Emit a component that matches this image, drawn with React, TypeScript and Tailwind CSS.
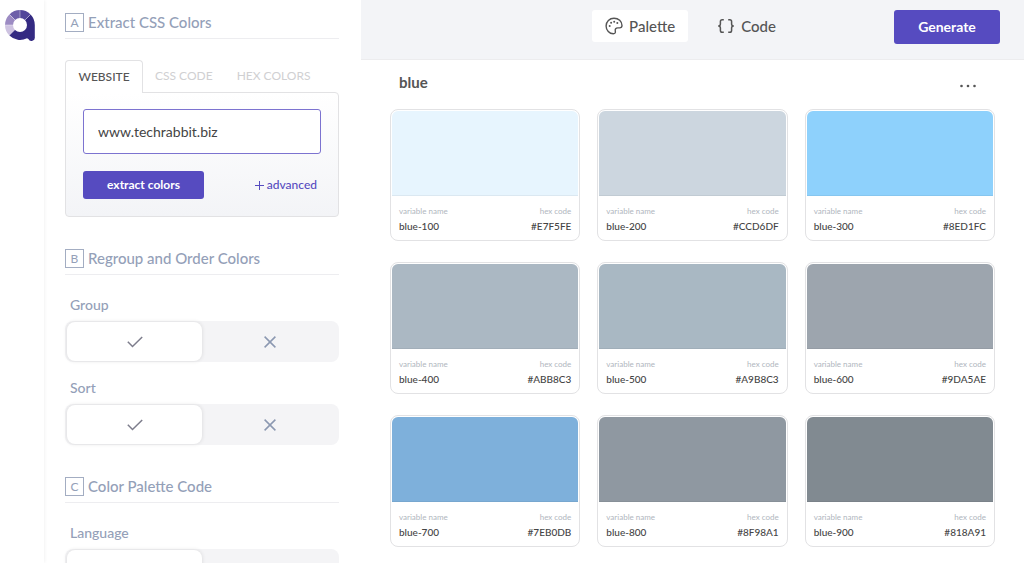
import { clsx } from "clsx";
import { useState } from "react";

type Swatch = { name: string; hex: string };

const swatches: Swatch[] = [
  { name: "blue-100", hex: "#E7F5FE" },
  { name: "blue-200", hex: "#CCD6DF" },
  { name: "blue-300", hex: "#8ED1FC" },
  { name: "blue-400", hex: "#ABB8C3" },
  { name: "blue-500", hex: "#A9B8C3" },
  { name: "blue-600", hex: "#9DA5AE" },
  { name: "blue-700", hex: "#7EB0DB" },
  { name: "blue-800", hex: "#8F98A1" },
  { name: "blue-900", hex: "#818A91" },
];

const Logo = () => (
  <svg viewBox="0 0 30 31" className="w-[30px] h-[31px]" aria-hidden="true">
    <path d="M15 15 V0 A15 15 0 0 1 25.6 4.4 Z" fill="#51469a" />
    <path d="M15 15 L4.4 4.4 A15 15 0 0 1 15 0 Z" fill="#6e60a9" />
    <path d="M15 15 H0 A15 15 0 0 1 4.4 4.4 Z" fill="#9c8bc3" />
    <path d="M15 15 L4.4 25.6 A15 15 0 0 1 0 15 Z" fill="#cec3e1" />
    <path
      d="M15 15 L25.6 4.4 Q29.8 8.8 29.8 15 V27 A3.4 3.4 0 0 1 23.4 29 L22 28.2 A15 15 0 0 1 4.4 25.6 Z"
      fill="#342a82"
    />
    <path d="M15 0 V8 M4.4 4.4 L10 10 M0 15 H8 M25.6 4.4 L20 10" stroke="#fff" strokeWidth="0.4" />
    <circle cx="15" cy="15" r="7" fill="#fff" />
  </svg>
);

const PaletteIcon = () => (
  <svg viewBox="0 0 18 18" className="size-[18px]" fill="none" aria-hidden="true">
    <path
      d="M9 1.2 C4.5 1.2 1.1 4.6 1.1 8.9 C1.1 13.2 4.4 16.8 8.3 16.8 C10.2 16.8 10.6 15.6 10.3 14 C9.9 12 10.8 10.9 12.8 10.9 H14.6 C16.3 10.9 17 10 17 8.6 C17 4.4 13.5 1.2 9 1.2 Z"
      stroke="currentColor"
      strokeWidth="1.4"
    />
    <g fill="currentColor">
      <circle cx="4.7" cy="9" r="1" />
      <circle cx="6.1" cy="5.8" r="1" />
      <circle cx="9.2" cy="4.7" r="1" />
      <circle cx="12.3" cy="5.9" r="1" />
    </g>
  </svg>
);

const BracesIcon = () => (
  <svg
    viewBox="0 0 18 16"
    className="w-[18px] h-4"
    fill="none"
    stroke="currentColor"
    strokeWidth="1.5"
    aria-hidden="true"
  >
    <path d="M6.8 1.7 H5.2 Q3.4 1.7 3.4 3.5 V6 Q3.4 8 1.2 8 Q3.4 8 3.4 10 V12.5 Q3.4 14.3 5.2 14.3 H6.8" />
    <path d="M11.2 1.7 H12.8 Q14.6 1.7 14.6 3.5 V6 Q14.6 8 16.8 8 Q14.6 8 14.6 10 V12.5 Q14.6 14.3 12.8 14.3 H11.2" />
  </svg>
);

const SectionTitle = ({ letter, title }: { letter: string; title: string }) => (
  <h2 className="flex items-center gap-1 pb-[6px] border-b border-[#ededf0] text-[#94a0b8]">
    <span className="flex items-center justify-center size-[19px] border border-[#a3adc2] text-xs">
      {letter}
    </span>
    <span className="text-[15px] leading-[19px] font-medium">{title}</span>
  </h2>
);

const Toggle = ({ label }: { label: string }) => {
  const [on, setOn] = useState(true);
  const option = "flex items-center justify-center rounded-lg";
  const active = "bg-white shadow-[0_0_4px_rgba(0,0,0,0.12)]";

  return (
    <div role="group" aria-label={label}>
      <div className="pl-[5px] mb-[6px] text-sm font-medium text-[#94a0b8]">{label}</div>
      <div className="grid grid-cols-2 h-[41px] py-px px-0.5 rounded-lg bg-[#f4f4f6]">
        <button
          type="button"
          aria-label={`${label} on`}
          aria-pressed={on}
          onClick={() => setOn(true)}
          className={clsx(option, on && active)}
        >
          <svg viewBox="0 0 16 12" className="w-4 h-3" fill="none" stroke="#7d7d8c" strokeWidth="1.5">
            <path d="M0.8 5.8 L5.5 10.5 L15.2 1" />
          </svg>
        </button>
        <button
          type="button"
          aria-label={`${label} off`}
          aria-pressed={!on}
          onClick={() => setOn(false)}
          className={clsx(option, !on && active)}
        >
          <svg viewBox="0 0 12 12" className="size-3" fill="none" stroke="#8b98b1" strokeWidth="1.5">
            <path d="M0.6 0.6 L11.4 11.4 M11.4 0.6 L0.6 11.4" />
          </svg>
        </button>
      </div>
    </div>
  );
};

const ExtractForm = () => (
  <div className="mt-[21px]">
    <div className="flex items-stretch h-8 text-xs">
      <button
        type="button"
        className="relative z-10 w-[78px] -mb-px border border-b-0 border-[#e2e2e4] rounded-t bg-white text-[#555] font-medium"
      >
        WEBSITE
      </button>
      <button type="button" className="px-3 text-[#d0d0d2]">
        CSS CODE
      </button>
      <button type="button" className="px-3 text-[#d0d0d2]">
        HEX COLORS
      </button>
    </div>
    <form
      onSubmit={(e) => e.preventDefault()}
      className="px-[17px] pt-4 pb-[17px] border border-[#e2e2e4] rounded-b rounded-tr bg-linear-to-b from-white to-[#f3f4f7]"
    >
      <input
        type="text"
        aria-label="Website"
        defaultValue="www.techrabbit.biz"
        className="w-full h-[45px] px-[14px] border border-[#7c73d0] rounded-[3px] bg-white text-sm text-[#444] outline-none"
      />
      <div className="flex items-center justify-between mt-[17px] pr-1">
        <button
          type="submit"
          className="w-[121px] h-[28px] rounded-[3px] bg-[#564bc0] text-xs font-bold text-white"
        >
          extract colors
        </button>
        <button type="button" className="flex items-center gap-[3px] text-xs font-medium text-[#564bc0]">
          <svg viewBox="0 0 9 9" className="size-[9px]" stroke="currentColor" strokeWidth="1">
            <path d="M4.5 0 V9 M0 4.5 H9" />
          </svg>
          advanced
        </button>
      </div>
    </form>
  </div>
);

const Sidebar = () => (
  <aside className="w-[317px] shrink-0 pl-[21px] pr-[22px] pt-[13px] flex flex-col gap-8">
    <section>
      <SectionTitle letter="A" title="Extract CSS Colors" />
      <ExtractForm />
    </section>
    <section>
      <SectionTitle letter="B" title="Regroup and Order Colors" />
      <div className="flex flex-col gap-4 mt-5">
        <Toggle label="Group" />
        <Toggle label="Sort" />
      </div>
    </section>
    <section>
      <SectionTitle letter="C" title="Color Palette Code" />
      <div className="mt-5">
        <Toggle label="Language" />
      </div>
    </section>
  </aside>
);

const Header = () => (
  <header className="flex items-start h-[60px] pt-[10px] pr-6 bg-[#f3f4f7] border-b border-[#ececee]">
    <div className="flex-1 pl-5" />
    <nav className="flex gap-4 text-[15px] font-medium text-[#555]">
      <button type="button" className="flex items-center gap-[6px] h-8 px-[13px] rounded-[3px] bg-white">
        <PaletteIcon />
        Palette
      </button>
      <button type="button" className="flex items-center gap-[6px] h-8 px-[13px] rounded-[3px]">
        <BracesIcon />
        Code
      </button>
    </nav>
    <div className="flex-1 flex justify-end">
      <button
        type="button"
        className="w-[106px] h-[34px] rounded-[3px] bg-[#564bc0] text-sm font-bold text-white"
      >
        Generate
      </button>
    </div>
  </header>
);

const Card = ({ name, hex }: Swatch) => (
  <li className="p-px border border-[#e2e2e4] rounded-lg h-[132px]">
    <div
      className="h-[85px] rounded-t-[6px] border-b border-black/5"
      style={{ backgroundColor: hex }}
    />
    <dl className="flex justify-between px-[7px] pt-2 text-[10px] leading-4 font-medium text-[#444]">
      <div>
        <dt className="text-[8px] leading-[14px] font-normal text-[#b0b6be]">variable name</dt>
        <dd>{name}</dd>
      </div>
      <div className="text-right">
        <dt className="text-[8px] leading-[14px] font-normal text-[#b0b6be]">hex code</dt>
        <dd>{hex}</dd>
      </div>
    </dl>
  </li>
);

const App = () => (
  <div className="flex h-screen overflow-hidden bg-white font-['Lato',sans-serif]">
    <div className="w-11 shrink-0 pt-[10px] pl-[5px] shadow-[0_0_4px_rgba(0,0,0,0.08)]">
      <Logo />
    </div>
    <Sidebar />
    <main className="flex-1 min-w-0">
      <Header />
      <div className="px-[29px] pt-[11px]">
        <div className="flex items-center justify-between pl-[9px] pr-[19px] mb-4">
          <h1 className="text-[15px] leading-[22px] font-bold text-[#555]">blue</h1>
          <button type="button" aria-label="More options">
            <svg viewBox="0 0 16 4" className="w-4 h-1 mt-2" fill="#555">
              <circle cx="1.5" cy="2" r="1.3" />
              <circle cx="8" cy="2" r="1.3" />
              <circle cx="14.5" cy="2" r="1.3" />
            </svg>
          </button>
        </div>
        <ul className="grid grid-cols-3 gap-x-[17px] gap-y-[21px]">
          {swatches.map((swatch) => (
            <Card key={swatch.name} {...swatch} />
          ))}
        </ul>
      </div>
    </main>
  </div>
);

export default App;
